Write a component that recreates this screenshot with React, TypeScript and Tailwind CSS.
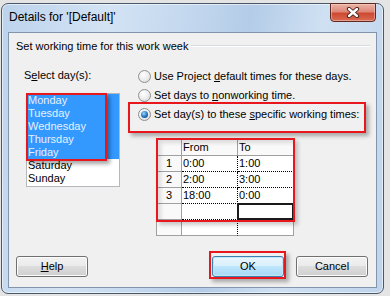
import React from 'react';

const days = ['Monday', 'Tuesday', 'Wednesday', 'Thursday', 'Friday', 'Saturday', 'Sunday'];

const rows = [
  { n: '1', from: '0:00', to: '1:00' },
  { n: '2', from: '2:00', to: '3:00' },
  { n: '3', from: '18:00', to: '0:00' },
  { n: '', from: '', to: '' },
  { n: '', from: '', to: '' },
];

function Radio({ checked }: { checked?: boolean }) {
  return (
    <span className="w-[13px] h-[13px] shrink-0 rounded-full border border-[#8e8f8f] bg-[radial-gradient(circle_at_40%_35%,#ffffff,#ebebeb_55%,#cfcfcf)] flex items-center justify-center">
      {checked && (
        <span className="w-[7px] h-[7px] rounded-full bg-[radial-gradient(circle_at_40%_35%,#9ad8ff,#1f72bb_55%,#0c3d75)]" />
      )}
    </span>
  );
}

function CloseButton() {
  return (
    <div className="mr-[7px] w-[46px] h-[19px] -mt-[1px] rounded-b-[4px] border border-[#5e2a22] bg-[linear-gradient(#ecb3a6,#de8878_45%,#cc4a31_55%,#da6a52)] shadow-[inset_0_0_0_1px_rgba(255,220,210,0.45)] flex items-center justify-center">
      <svg width="14" height="11" viewBox="0 0 14 11">
        <path d="M3 2 L11 9 M11 2 L3 9" stroke="#3b1b16" strokeWidth="4.2" strokeLinecap="round" />
        <path d="M3 2 L11 9 M11 2 L3 9" stroke="#ffffff" strokeWidth="2.4" strokeLinecap="round" />
      </svg>
    </div>
  );
}

export default function App() {
  return (
    <div className="w-[390px] h-[296px] overflow-hidden bg-[#e4e4e4] pt-[3px] pl-[1px] font-['Liberation_Sans',Arial,sans-serif] text-[11px] text-black">
      <div className="w-[383px] h-[291px] rounded-[7px] border border-[#4a596a] bg-[linear-gradient(100deg,#bcd3ec_0%,#d3e3f4_25%,#c2d7ee_45%,#b4cce8_58%,#cfe0f2_75%,#bfd4ec_100%)] shadow-[inset_0_0_0_1px_rgba(255,255,255,0.55)] flex flex-col">
        <div className="h-[28px] flex items-start justify-between">
          <div className="pl-[7px] pt-[5px] text-[12px] leading-[16px]">Details for '[Default]'</div>
          <CloseButton />
        </div>

        <div className="ml-[6px] w-[369px] h-[256px] border border-[#8196ac] bg-[#f0f0f0] flex flex-col">
          <div className="mt-[6px] pl-[7px] pr-[6px] flex items-center h-[14px]">
            <span className="leading-[14px] whitespace-nowrap">Set working time for this work week</span>
            <div className="ml-[3px] flex-1 border-t border-[#d5dde3] border-b border-b-white" />
          </div>

          <div className="flex">
            <div className="pl-[15px] flex flex-col">
              <div className="mt-[15px] leading-[14px]">
                S<span className="underline">e</span>lect day(s):
              </div>
              <div className="relative mt-[11px] ml-[2px] w-[94px] h-[94px] border border-[#b5b8bd] bg-white">
                {days.map((d, i) => (
                  <div
                    key={d}
                    className={`h-[13px] leading-[13px] pl-[1px] ${i < 5 ? 'bg-[#3399ff] text-[#e8f0ff]' : 'text-black'}`}
                  >
                    {d}
                  </div>
                ))}
                <div className="absolute -left-[1px] -top-[1px] w-[81px] h-[68px] border-2 border-[#e8171e] shadow-[3px_3px_4px_rgba(0,0,0,0.35)]" />
              </div>
            </div>

            <div className="ml-[18px] flex flex-col">
              <div className="mt-[14px] h-[19px] flex items-center gap-[3px]">
                <Radio />
                <span>
                  Use Project <span className="underline">d</span>efault times for these days.
                </span>
              </div>
              <div className="h-[19px] flex items-center gap-[3px]">
                <Radio />
                <span>
                  Set days to <span className="underline">n</span>onworking time.
                </span>
              </div>
              <div className="relative h-[19px] flex items-center gap-[3px]">
                <Radio checked />
                <span>
                  Set day(s) to these <span className="underline">s</span>pecific working times:
                </span>
                <div className="absolute -left-[10px] -top-[3px] w-[238px] h-[31px] border-2 border-[#e8171e] shadow-[3px_3px_4px_rgba(0,0,0,0.3)]" />
              </div>

              <div className="relative mt-[14px] ml-[18px] w-[138px] border-l border-t border-[#a0a0a0] bg-white">
                <div className="flex h-[17px] bg-[#f9f9f9]">
                  <div className="w-[25px] border-r border-b border-[#a0a0a0]" />
                  <div className="w-[56px] border-r border-b border-[#a0a0a0] pl-[1px] leading-[16px]">From</div>
                  <div className="w-[56px] border-r border-b border-[#a0a0a0] pl-[1px] leading-[16px]">To</div>
                </div>
                {rows.map((r, i) => (
                  <div key={i} className="flex h-[16px]">
                    <div className="w-[25px] border-r border-b border-[#a0a0a0] bg-[#f9f9f9] text-center leading-[15px]">{r.n}</div>
                    <div
                      className={`w-[56px] border-r border-b border-dotted border-r-black pl-[1px] leading-[15px] ${i < 4 ? 'border-b-black' : 'border-b-[#a0a0a0] [border-bottom-style:solid]'}`}
                    >
                      {r.from}
                    </div>
                    <div
                      className={`relative w-[56px] border-r border-b border-r-[#a0a0a0] pl-[1px] leading-[15px] ${i < 3 ? 'border-b-black [border-bottom-style:dotted]' : 'border-b-[#a0a0a0]'}`}
                    >
                      {r.to}
                      {i === 3 && <div className="absolute -left-[1px] -top-[1px] -right-[1px] -bottom-[1px] border-2 border-[#1a1a1a]" />}
                    </div>
                  </div>
                ))}
                <div className="absolute -left-[1px] -top-[1px] w-[139px] h-[84px] border-2 border-[#e8171e] shadow-[inset_3px_3px_4px_rgba(0,0,0,0.12),3px_3px_4px_rgba(0,0,0,0.2)]" />
              </div>
            </div>
          </div>

          <div className="mt-auto mb-[10px] pl-[7px] pr-[8px] flex items-end">
            <button className="w-[72px] h-[21px] rounded-[3px] border border-[#707070] bg-[linear-gradient(#f2f2f2,#ebebeb_45%,#dddddd_50%,#cfcfcf)] shadow-[inset_0_0_0_1px_#fcfcfc] leading-[19px]">
              <span className="underline">H</span>elp
            </button>
            <div className="flex-1" />
            <div className="relative">
              <button className="w-[72px] h-[21px] rounded-[3px] border border-[#3c7fb1] bg-[linear-gradient(#eaf6fd,#d9f0fc_45%,#bee6fd_50%,#a7d9f5)] shadow-[inset_0_0_0_1px_#c4e5f6] leading-[19px]">
                OK
              </button>
              <div className="absolute -left-[3px] -top-[5px] w-[77px] h-[28px] border-2 border-[#e8171e] shadow-[3px_3px_4px_rgba(0,0,0,0.3)]" />
            </div>
            <button className="ml-[12px] w-[72px] h-[21px] rounded-[3px] border border-[#707070] bg-[linear-gradient(#f2f2f2,#ebebeb_45%,#dddddd_50%,#cfcfcf)] shadow-[inset_0_0_0_1px_#fcfcfc] leading-[19px]">
              Cancel
            </button>
          </div>
        </div>
      </div>
    </div>
  );
}
